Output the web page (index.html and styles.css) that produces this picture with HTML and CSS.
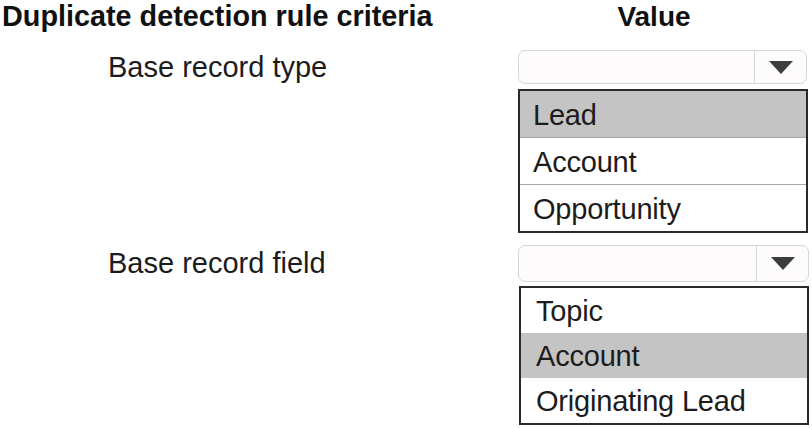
FILE: index.html
```html
<!DOCTYPE html>
<html>
<head>
  <title>Duplicate detection rule criteria</title>
  <link rel="stylesheet" href="styles.css">
</head>
<body>

  <div class="criteria">
    <div class="head-row">
      <h2 class="col-title">Duplicate detection rule criteria</h2>
      <h2 class="col-value">Value</h2>
    </div>

    <!-- Base record type -->
    <div class="rule rule-type">
      <div class="label">Base record type</div>
      <div class="value">
        <div class="dropdown">
          <div class="dropdown-text"></div>
          <div class="dropdown-btn">
            <svg width="24" height="13" viewBox="0 0 24 13"><path d="M0 0 H24 L12 13 Z" fill="#3d3d3d"/></svg>
          </div>
        </div>
        <ul class="options lined">
          <li class="selected">Lead</li>
          <li>Account</li>
          <li>Opportunity</li>
        </ul>
      </div>
    </div>

    <!-- Base record field -->
    <div class="rule rule-field">
      <div class="label">Base record field</div>
      <div class="value">
        <div class="dropdown">
          <div class="dropdown-text"></div>
          <div class="dropdown-btn">
            <svg width="24" height="13" viewBox="0 0 24 13"><path d="M0 0 H24 L12 13 Z" fill="#3d3d3d"/></svg>
          </div>
        </div>
        <ul class="options">
          <li>Topic</li>
          <li class="selected">Account</li>
          <li>Originating Lead</li>
        </ul>
      </div>
    </div>
  </div>

</body>
</html>
```

FILE: styles.css
```css
body {
  margin: 0;
  background: #fff;
  font-family: "Liberation Sans", Arial, sans-serif;
  color: #1c1c1c;
}

.criteria {
  width: 812px;
}

.head-row {
  display: grid;
  grid-template-columns: 518px 290px;
}

.head-row h2 {
  margin: 0;
  font-size: 28px;
  line-height: 33px;
  font-weight: bold;
  color: #111;
}

.head-row .col-title {
  padding-left: 2px;
  font-size: 28.8px;
}

.col-value {
  text-align: center;
  padding-right: 18px;
}

.rule {
  display: grid;
  grid-template-columns: 518px 290px;
}

.rule-type {
  margin-top: 17px;
}

.rule-field {
  margin-top: 12px;
}

.label {
  padding-left: 108px;
  font-size: 29px;
  line-height: 34px;
}

.rule-field .label {
  line-height: 37px;
}

/* Closed select box */
.dropdown {
  display: flex;
  height: 32px;
  border: 1px solid #d6d6d6;
  border-radius: 7px;
  background: #fefbfc;
  width: 287px;
}

.rule-field .dropdown {
  height: 35px;
  width: 289px;
}

.dropdown-text {
  flex: 1;
}

.dropdown-btn {
  width: 51px;
  border-left: 1px solid #d4d4d4;
  display: flex;
  justify-content: center;
  align-items: center;
}

/* Open option list */
.options {
  list-style: none;
  margin: 5px 0 0 0;
  padding: 0;
  border: 2px solid #2a2a2a;
  width: 286px;
}

.rule-field .options {
  margin-top: 4px;
  margin-left: 1px;
}

.options li {
  padding-left: 13px;
  font-size: 29px;
  letter-spacing: -0.2px;
  line-height: 48px;
  height: 46px;
}

.rule-field .options li {
  padding-left: 15px;
  line-height: 46px;
  height: 45px;
}

.options.lined li + li {
  border-top: 1px solid #a8a8a8;
}

.options li.selected {
  background: #c4c4c4;
}
```
